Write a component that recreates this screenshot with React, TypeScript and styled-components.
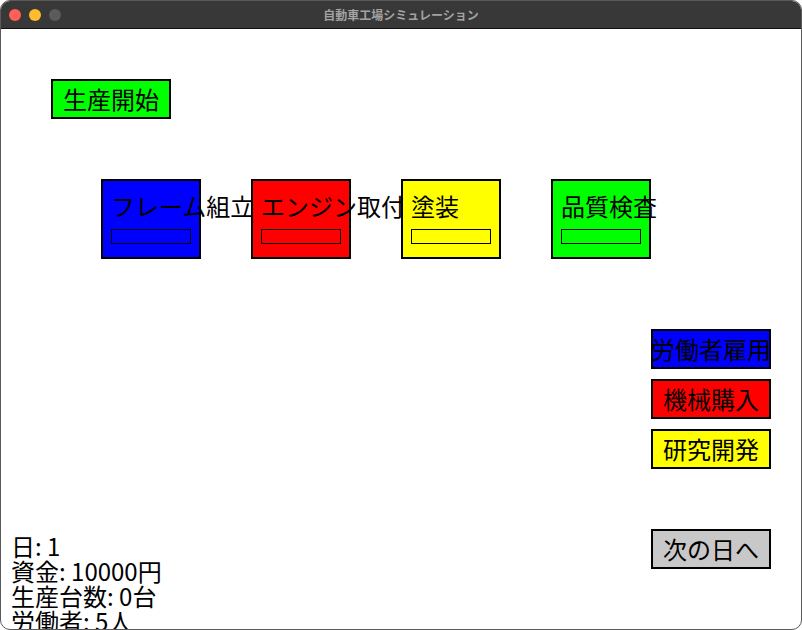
import * as React from 'react';
import styled, { createGlobalStyle } from 'styled-components';

const GlobalStyle = createGlobalStyle`
    html, body {
        margin: 0;
        padding: 0;
        background: #ffffff;
    }
    body {
        font-family: "Noto Sans CJK JP", "Noto Sans", sans-serif;
    }
`;

const Window = styled.div`
    width: 802px;
    height: 630px;
    box-sizing: border-box;
    border: 1px solid #5a5a5a;
    border-radius: 10px;
    overflow: hidden;
    display: flex;
    flex-direction: column;
    background: #ffffff;
`;

const TitleBar = styled.div`
    height: 27px;
    flex: none;
    background: #383838;
    border-bottom: 1px solid #111111;
    display: grid;
    grid-template-columns: 1fr auto 1fr;
    align-items: center;
`;

const Lights = styled.div`
    display: flex;
    gap: 8px;
    padding-left: 8px;
`;

const Light = styled.span<{ $color: string }>`
    width: 12px;
    height: 12px;
    border-radius: 50%;
    background: ${(p) => p.$color};
`;

const Title = styled.div`
    color: #a3a3a3;
    font-size: 12px;
    font-weight: 700;
    line-height: 1;
`;

const Canvas = styled.div`
    flex: 1;
    min-height: 0;
    overflow: hidden;
    display: flex;
    flex-direction: column;
    align-items: flex-start;
    color: #000000;
`;

const Button = styled.div<{ $bg: string }>`
    width: 120px;
    height: 40px;
    flex: none;
    box-sizing: border-box;
    border: 2px solid #000000;
    background: ${(p) => p.$bg};
    display: flex;
    align-items: center;
    justify-content: center;
    font-size: 24px;
    line-height: 1;
    white-space: nowrap;
    cursor: pointer;
`;

const StartButton = styled(Button)`
    margin: 50px 0 0 50px;
`;

const StationRow = styled.div`
    display: flex;
    gap: 50px;
    margin-top: 60px;
    padding-left: 100px;
`;

const Station = styled.div<{ $bg: string }>`
    width: 100px;
    height: 80px;
    box-sizing: border-box;
    border: 2px solid #000000;
    background: ${(p) => p.$bg};
    padding: 13px 0 0 8px;
    display: flex;
    flex-direction: column;
    align-items: flex-start;
`;

const StationName = styled.div`
    font-size: 24px;
    line-height: 24px;
    white-space: nowrap;
`;

const ProgressBar = styled.div`
    width: 80px;
    height: 15px;
    margin-top: 11px;
    box-sizing: border-box;
    border: 1px solid #000000;
`;

const ProgressFill = styled.div`
    height: 100%;
    background: #000000;
`;

const Lower = styled.div`
    align-self: stretch;
    display: flex;
    justify-content: space-between;
    margin-top: 70px;
`;

const Stats = styled.div`
    padding: 204px 0 0 10px;
    font-size: 24px;
    line-height: 25px;
    white-space: nowrap;
`;

const SideColumn = styled.div`
    display: flex;
    flex-direction: column;
    gap: 10px;
    padding-right: 30px;
`;

const NextDayButton = styled(Button)`
    margin-top: 50px;
`;

const stations = [
    { name: 'フレーム組立', color: '#0000ff', progress: 0 },
    { name: 'エンジン取付', color: '#ff0000', progress: 0 },
    { name: '塗装', color: '#ffff00', progress: 0 },
    { name: '品質検査', color: '#00ff00', progress: 0 },
];

const actions = [
    { label: '労働者雇用', color: '#0000ff' },
    { label: '機械購入', color: '#ff0000' },
    { label: '研究開発', color: '#ffff00' },
];

export default function App() {
    const stats = {
        day: 1,
        money: 10000,
        produced: 0,
        workers: 5,
        machines: 0,
    };

    return (
        <>
            <GlobalStyle />
            <Window>
                <TitleBar>
                    <Lights>
                        <Light $color="#ff5f57" />
                        <Light $color="#febc2e" />
                        <Light $color="#5b5b5b" />
                    </Lights>
                    <Title>自動車工場シミュレーション</Title>
                    <div />
                </TitleBar>
                <Canvas>
                    <StartButton $bg="#00ff00">生産開始</StartButton>
                    <StationRow>
                        {stations.map((s) => (
                            <Station key={s.name} $bg={s.color}>
                                <StationName>{s.name}</StationName>
                                <ProgressBar>
                                    <ProgressFill style={{ width: `${s.progress}%` }} />
                                </ProgressBar>
                            </Station>
                        ))}
                    </StationRow>
                    <Lower>
                        <Stats>
                            <div>日: {stats.day}</div>
                            <div>資金: {stats.money}円</div>
                            <div>生産台数: {stats.produced}台</div>
                            <div>労働者: {stats.workers}人</div>
                            <div>機械: {stats.machines}台</div>
                        </Stats>
                        <SideColumn>
                            {actions.map((a) => (
                                <Button key={a.label} $bg={a.color}>{a.label}</Button>
                            ))}
                            <NextDayButton $bg="#c8c8c8">次の日へ</NextDayButton>
                        </SideColumn>
                    </Lower>
                </Canvas>
            </Window>
        </>
    );
}
